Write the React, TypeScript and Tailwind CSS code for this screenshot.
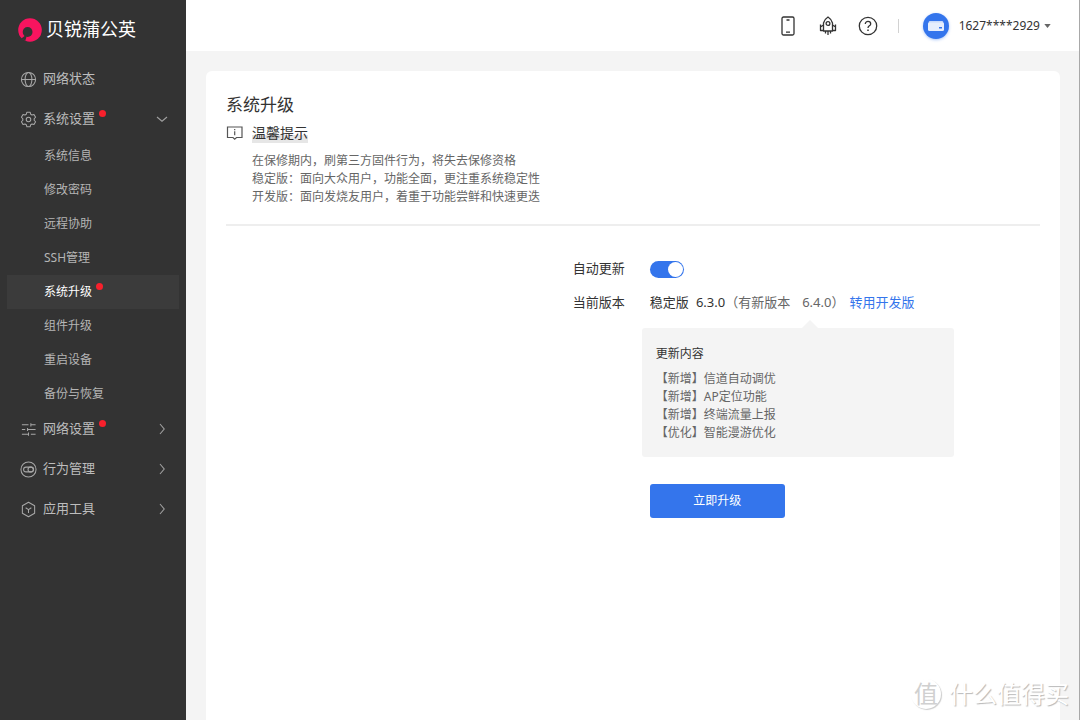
import React, { useState } from "react";

const FONT =
  "font-['Noto_Sans','Noto_Sans_CJK_SC',sans-serif]";

function Dot() {
  return <span className="mb-3 ml-1 size-[7px] rounded-full bg-[#f8202c]" />;
}

function Chevron({ down = false }: { down?: boolean }) {
  return (
    <svg viewBox="0 0 12 12" className="ml-auto size-3" fill="none" stroke="#a0a0a0" strokeWidth="1.1">
      {down ? <path d="M1 4l5 4.2L11 4" /> : <path d="M4 1l4.2 5L4 11" />}
    </svg>
  );
}

function NavIcon({ name }: { name: string }) {
  return (
    <svg viewBox="0 0 18 18" className="size-[17px] shrink-0" fill="none" stroke="#a8a8a8" strokeWidth="1.1" strokeLinejoin="round">
      {name === "globe" && (
        <>
          <circle cx="9" cy="9" r="7.5" />
          <ellipse cx="9" cy="9" rx="3.6" ry="7.5" />
          <path d="M1.5 9h15" />
        </>
      )}
      {name === "gear" && (
        <>
          <path d="M7.3 1.3h3.4l.6 2.1 1.4.8 2.1-.5 1.7 2.9L15 8.2v1.6l1.5 1.6-1.7 2.9-2.1-.5-1.4.8-.6 2.1H7.3l-.6-2.1-1.4-.8-2.1.5-1.7-2.9L3 9.8V8.2L1.5 6.6l1.7-2.9 2.1.5 1.4-.8z" />
          <circle cx="9" cy="9" r="2.4" />
        </>
      )}
      {name === "sliders" && (
        <path d="M2 4h7M11.5 4h5M11.5 2.3v3.4M2 9h3.5M8 9h8.5M8 7.3v3.4M2 14h7M11.5 14h5M9 12.3v3.4" />
      )}
      {name === "toggle" && (
        <>
          <circle cx="9" cy="9" r="8" />
          <rect x="3.8" y="6.5" width="10.4" height="5" rx="2.5" />
          <rect x="8.5" y="6.5" width="5.7" height="5" rx="2.5" />
        </>
      )}
      {name === "hex" && (
        <>
          <path d="M9 1.3l6.5 3.7v8L9 16.7 2.5 13V5z" />
          <path d="M6 7.2l3 1.9 3-1.9M9 9.1v3.5" />
        </>
      )}
    </svg>
  );
}

function NavItem({ icon, label, dot, arrow }: { icon: string; label: string; dot?: boolean; arrow?: "down" | "right" }) {
  return (
    <a href="#" className="flex h-10 items-center pr-[18px] pl-5 text-[13px] text-[#bdbdbd]">
      <NavIcon name={icon} />
      <span className="ml-1.5">{label}</span>
      {dot && <Dot />}
      {arrow && <Chevron down={arrow === "down"} />}
    </a>
  );
}

const SUB_ITEMS = ["系统信息", "修改密码", "远程协助", "SSH管理", "系统升级", "组件升级", "重启设备", "备份与恢复"];

function Sidebar() {
  return (
    <aside className="w-[186px] shrink-0 bg-[#333333]">
      <div className="flex h-[59px] items-center gap-1 pl-[18px]">
        <svg viewBox="0 0 24 24" className="size-6 shrink-0">
          <circle cx="12" cy="12" r="11.8" fill="#f8145f" />
          <circle cx="9.6" cy="14" r="4.9" fill="#333333" />
          <path d="M3.4 20.4l3.8-2.8 1.4.8-1.4 4.6z" fill="#333333" />
        </svg>
        <span className="text-[18px] text-white">贝锐蒲公英</span>
      </div>
      <nav>
        <NavItem icon="globe" label="网络状态" />
        <NavItem icon="gear" label="系统设置" dot arrow="down" />
        <ul className="-mb-0.5 px-[7px]">
          {SUB_ITEMS.map((s) => (
            <li key={s}>
              <a
                href="#"
                className={
                  s === "系统升级"
                    ? "flex h-[34px] items-center bg-[#3b3b3b] pl-[37px] text-xs text-white"
                    : "flex h-[34px] items-center pl-[37px] text-xs text-[#b5b5b5]"
                }
              >
                {s}
                {s === "系统升级" && <Dot />}
              </a>
            </li>
          ))}
        </ul>
        <NavItem icon="sliders" label="网络设置" dot arrow="right" />
        <NavItem icon="toggle" label="行为管理" arrow="right" />
        <NavItem icon="hex" label="应用工具" arrow="right" />
      </nav>
    </aside>
  );
}

function TopBar() {
  return (
    <header className="flex h-[51px] shrink-0 items-center justify-end bg-white pr-7">
      <div className="flex items-center gap-5">
        <button aria-label="手机">
          <svg viewBox="0 0 20 20" className="size-5" fill="none" stroke="#333" strokeWidth="1.3">
            <rect x="4" y="1" width="12" height="18" rx="1.5" />
            <path d="M8.5 4h3M8 16.2h4" />
          </svg>
        </button>
        <button aria-label="火箭">
          <svg viewBox="0 0 20 20" className="size-5" fill="none" stroke="#333" strokeWidth="1.3" strokeLinejoin="round">
            <path d="M5.500 15V7Q6.500 3.200 10 1Q13.500 3.200 14.500 7V15z" />
            <circle cx="10" cy="7.500" r="1.900" />
            <path d="M5.500 9L2.500 11v3.500h3M14.500 9l3 2v3.500h-3M2.500 8.500V11M17.500 8.500V11M7.500 15v2.500M10 15v4M12.500 15v2.500" />
          </svg>
        </button>
        <button aria-label="帮助">
          <svg viewBox="0 0 20 20" className="size-5" fill="none" stroke="#333" strokeWidth="1.3">
            <circle cx="10" cy="10" r="8.7" />
            <path d="M7.3 8.1c0-1.6 1.2-2.7 2.7-2.7s2.7 1 2.7 2.5c0 1.900-2.700 2-2.700 4" />
            <path d="M10 13.6v1.5" strokeWidth="1.5" />
          </svg>
        </button>
      </div>
      <span className="ml-5 h-3.5 w-px bg-[#d2d2d2]" />
      <button className="ml-6 flex items-center text-xs text-[#333333]">
        <span className="flex size-[26px] items-center justify-center rounded-full bg-[#3475ec] shadow-[0_1px_3px_#3475ec66]">
          <svg viewBox="0 0 16 10" className="h-2.5 w-4">
            <path d="M2 0h12q1 0 1.300 1L16 4H0L.7 1Q1 0 2 0z" fill="#c9dafa" />
            <rect y="1.5" width="16" height="8.5" rx="1.5" fill="#e6eefd" />
            <rect x="11" y="6" width="3" height="1.5" fill="#3475ec" />
          </svg>
        </span>
        <span className="ml-2.5">1627****2929</span>
        <svg viewBox="0 0 8 5" className="ml-1 h-1 w-[7px]">
          <path d="M0 0h8L4 5z" fill="#666" />
        </svg>
      </button>
    </header>
  );
}

function UpgradeForm() {
  const [auto, setAuto] = useState(true);
  return (
    <div className="pt-[26px] text-[13px] text-[#333333]">
      <div className="flex h-[34px] items-center">
        <label htmlFor="auto" className="w-[49%] text-right">自动更新</label>
        <input
          id="auto"
          type="checkbox"
          role="switch"
          checked={auto}
          onChange={(e) => setAuto(e.target.checked)}
          className="ml-[25px] flex h-[17px] w-[34px] appearance-none items-center rounded-full bg-[#c4c4c4] px-px before:size-[15px] before:rounded-full before:bg-white checked:justify-end checked:bg-[#3475ec]"
        />
      </div>
      <div className="flex h-[34px] items-center">
        <span className="w-[49%] shrink-0 text-right">当前版本</span>
        <div className="ml-[25px] flex whitespace-nowrap">
          <span>稳定版</span>
          <span className="ml-[7px]">6.3.0</span>
          <span className="text-[#666666]">（有新版本</span>
          <span className="relative ml-3 text-[#666666]">
            6.4.0）
            <span className="absolute top-[27px] left-0 border-x-8 border-b-8 border-x-transparent border-b-[#f4f4f4]" />
          </span>
          <a href="#" className="ml-[5px] text-[#3475ec]">转用开发版</a>
        </div>
      </div>
      <div className="flex">
        <div className="w-[49%] shrink-0" />
        <div className="ml-[17px] pt-2">
          <section className="w-[312px] rounded-[3px] bg-[#f4f4f4] px-3.5 pt-[17px] pb-[15px] text-xs leading-[18px]">
            <h3>更新内容</h3>
            <ul className="mt-[7px] text-[#666666]">
              <li>【新增】信道自动调优</li>
              <li>【新增】AP定位功能</li>
              <li>【新增】终端流量上报</li>
              <li>【优化】智能漫游优化</li>
            </ul>
          </section>
          <button className="mt-[27px] ml-2 h-[34px] w-[135px] rounded-[3px] bg-[#3475ec] text-xs text-white">立即升级</button>
        </div>
      </div>
    </div>
  );
}

function Watermark() {
  return (
    <div className="pointer-events-none absolute right-2.5 bottom-2 flex items-center gap-2 text-white [text-shadow:1px_1px_1px_#b8b8b8]">
      <span className="flex size-[30px] items-center justify-center rounded-full text-2xl text-[#d0d0d0] shadow-[1px_1px_1px_#cccccc] [text-shadow:none]">值</span>
      <span className="text-2xl leading-9">什么值得买</span>
    </div>
  );
}

export default function App() {
  return (
    <div className={`relative flex min-h-screen border-r border-[#a8a8a8] bg-[#f4f4f4] ${FONT}`}>
      <Sidebar />
      <div className="flex min-w-0 flex-1 flex-col">
        <TopBar />
        <main className="mt-5 mr-[19px] ml-5 flex-1 rounded-t-[6px] bg-white px-5 pt-[22px]">
          <h1 className="text-[17px] leading-6 text-[#333333]">系统升级</h1>
          <div className="mt-1.5 flex items-center">
            <svg viewBox="0 0 18 16" className="h-4 w-[18px]" fill="none" stroke="#555" strokeWidth="1.2">
              <path d="M1.5 2H16v10.500h-5.500L8.700 14.200 7 12.500H1.500z" />
              <path d="M8.700 6.300v4M8.700 4v1.200" />
            </svg>
            <h2 className="ml-2 bg-[linear-gradient(transparent_60%,#e6e6e6_60%)] text-sm leading-5 text-[#333333]">温馨提示</h2>
          </div>
          <div className="mt-[9px] border-b-2 border-[#eeeeee] pb-[18px] pl-[26px] text-xs leading-[18px] text-[#666666]">
            <p>在保修期内，刷第三方固件行为，将失去保修资格</p>
            <p>稳定版：面向大众用户，功能全面，更注重系统稳定性</p>
            <p>开发版：面向发烧友用户，着重于功能尝鲜和快速更迭</p>
          </div>
          <UpgradeForm />
        </main>
      </div>
      <Watermark />
    </div>
  );
}
